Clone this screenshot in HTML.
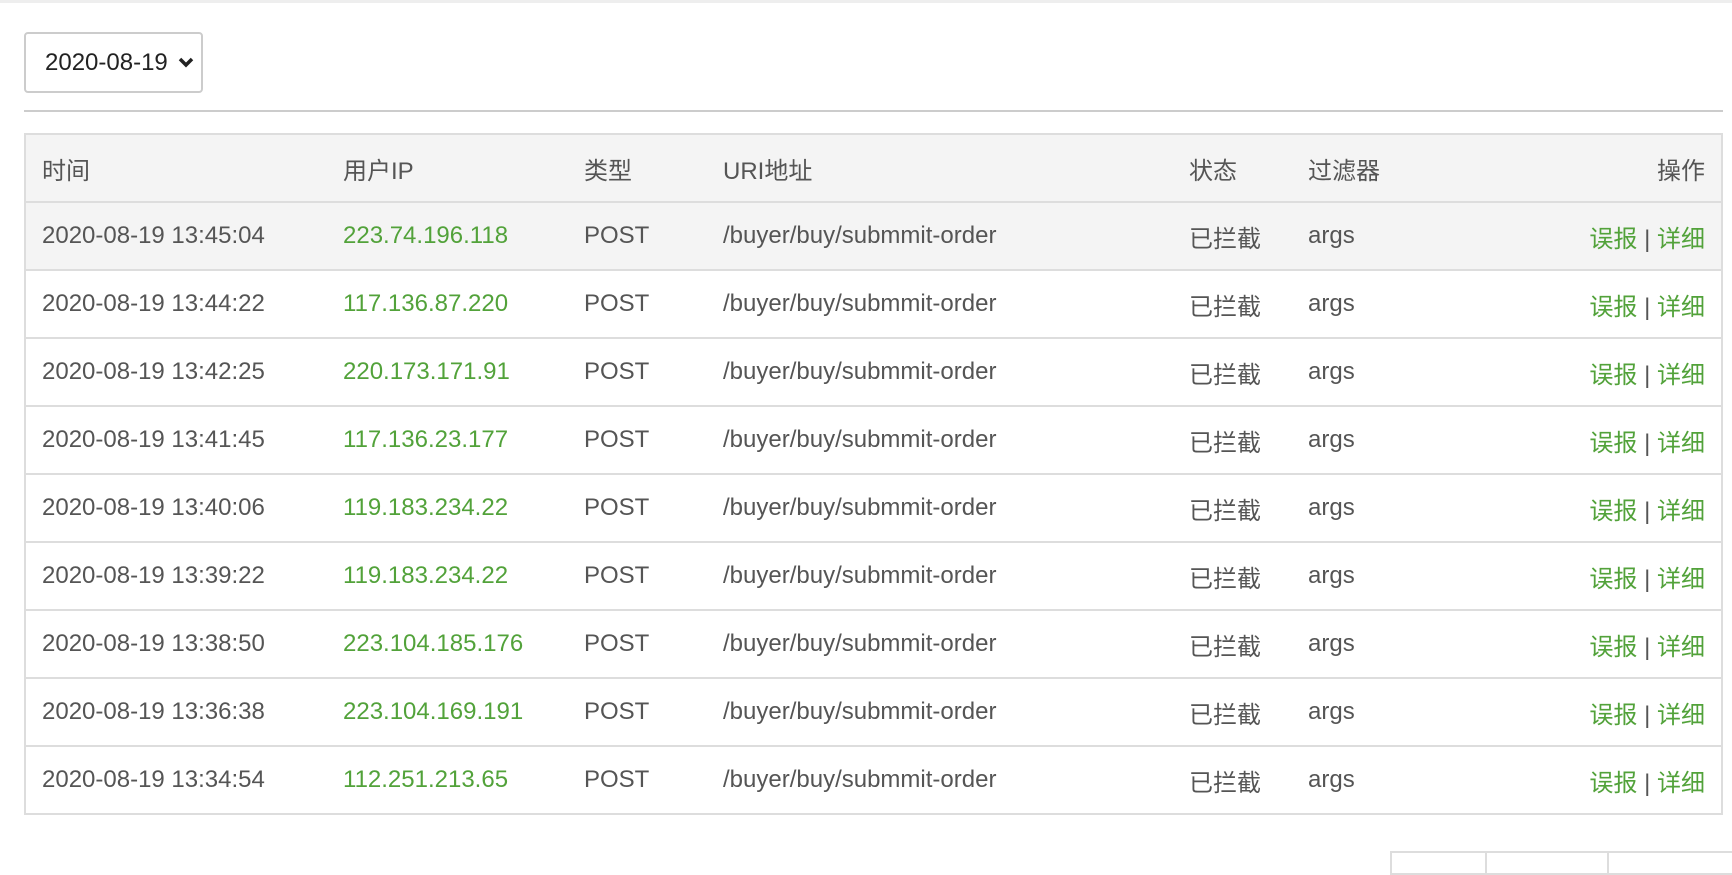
<!DOCTYPE html>
<html><head><meta charset="utf-8"><style>
body{margin:0;width:1732px;height:860px;overflow:hidden;background:#fff;font-family:"Liberation Sans","Noto Sans CJK SC",sans-serif;color:#555;position:relative}
.topbar{position:absolute;left:0;top:0;width:1732px;height:3px;background:#eee}
.sel{position:absolute;left:24px;top:32px;width:175px;height:57px;border:2px solid #ccc;border-radius:4px;box-sizing:content-box;font-size:24px;color:#222;line-height:57px}
.sel span{position:absolute;left:19px}
.sel svg{position:absolute;left:152px;top:23px}
.hr{position:absolute;left:24px;top:110px;width:1699px;height:2px;background:#ccc}
table{position:absolute;left:24px;top:133px;width:1699px;border-collapse:collapse;border:2px solid #ddd;font-size:24px;table-layout:fixed}
td,th{height:66px;border-top:2px solid #ddd;padding:0;text-align:left;font-weight:normal;white-space:nowrap;overflow:visible}
tr.h,tr.a{background:#f4f4f4}
td:first-child,th:first-child{padding-left:16px}
.r{text-align:right;padding-right:16px}
.g{color:#52a23a}
.pg{position:absolute;top:851px;height:20px;border:2px solid #ddd}
</style></head><body>
<div class="topbar"></div>
<div class="sel"><span>2020-08-19</span><svg width="16" height="12" viewBox="0 0 16 12"><path d="M2 2 L8 8 L14 2" stroke="#222" stroke-width="3.5" fill="none"/></svg></div>
<div class="hr"></div>
<table>
<colgroup><col style="width:318px"><col style="width:241px"><col style="width:139px"><col style="width:466px"><col style="width:119px"><col style="width:150px"><col></colgroup>
<tr class="h"><th>时间</th><th>用户IP</th><th>类型</th><th>URI地址</th><th>状态</th><th>过滤器</th><th class="r">操作</th></tr>
<tr class="a"><td>2020-08-19 13:45:04</td><td class="g">223.74.196.118</td><td>POST</td><td>/buyer/buy/submmit-order</td><td>已拦截</td><td>args</td><td class="r"><span class="g">误报</span> | <span class="g">详细</span></td></tr>
<tr><td>2020-08-19 13:44:22</td><td class="g">117.136.87.220</td><td>POST</td><td>/buyer/buy/submmit-order</td><td>已拦截</td><td>args</td><td class="r"><span class="g">误报</span> | <span class="g">详细</span></td></tr>
<tr><td>2020-08-19 13:42:25</td><td class="g">220.173.171.91</td><td>POST</td><td>/buyer/buy/submmit-order</td><td>已拦截</td><td>args</td><td class="r"><span class="g">误报</span> | <span class="g">详细</span></td></tr>
<tr><td>2020-08-19 13:41:45</td><td class="g">117.136.23.177</td><td>POST</td><td>/buyer/buy/submmit-order</td><td>已拦截</td><td>args</td><td class="r"><span class="g">误报</span> | <span class="g">详细</span></td></tr>
<tr><td>2020-08-19 13:40:06</td><td class="g">119.183.234.22</td><td>POST</td><td>/buyer/buy/submmit-order</td><td>已拦截</td><td>args</td><td class="r"><span class="g">误报</span> | <span class="g">详细</span></td></tr>
<tr><td>2020-08-19 13:39:22</td><td class="g">119.183.234.22</td><td>POST</td><td>/buyer/buy/submmit-order</td><td>已拦截</td><td>args</td><td class="r"><span class="g">误报</span> | <span class="g">详细</span></td></tr>
<tr><td>2020-08-19 13:38:50</td><td class="g">223.104.185.176</td><td>POST</td><td>/buyer/buy/submmit-order</td><td>已拦截</td><td>args</td><td class="r"><span class="g">误报</span> | <span class="g">详细</span></td></tr>
<tr><td>2020-08-19 13:36:38</td><td class="g">223.104.169.191</td><td>POST</td><td>/buyer/buy/submmit-order</td><td>已拦截</td><td>args</td><td class="r"><span class="g">误报</span> | <span class="g">详细</span></td></tr>
<tr><td>2020-08-19 13:34:54</td><td class="g">112.251.213.65</td><td>POST</td><td>/buyer/buy/submmit-order</td><td>已拦截</td><td>args</td><td class="r"><span class="g">误报</span> | <span class="g">详细</span></td></tr>
</table>
<div class="pg" style="left:1390px;width:93px"></div>
<div class="pg" style="left:1485px;width:120px"></div>
<div class="pg" style="left:1607px;width:130px"></div>
</body></html>
